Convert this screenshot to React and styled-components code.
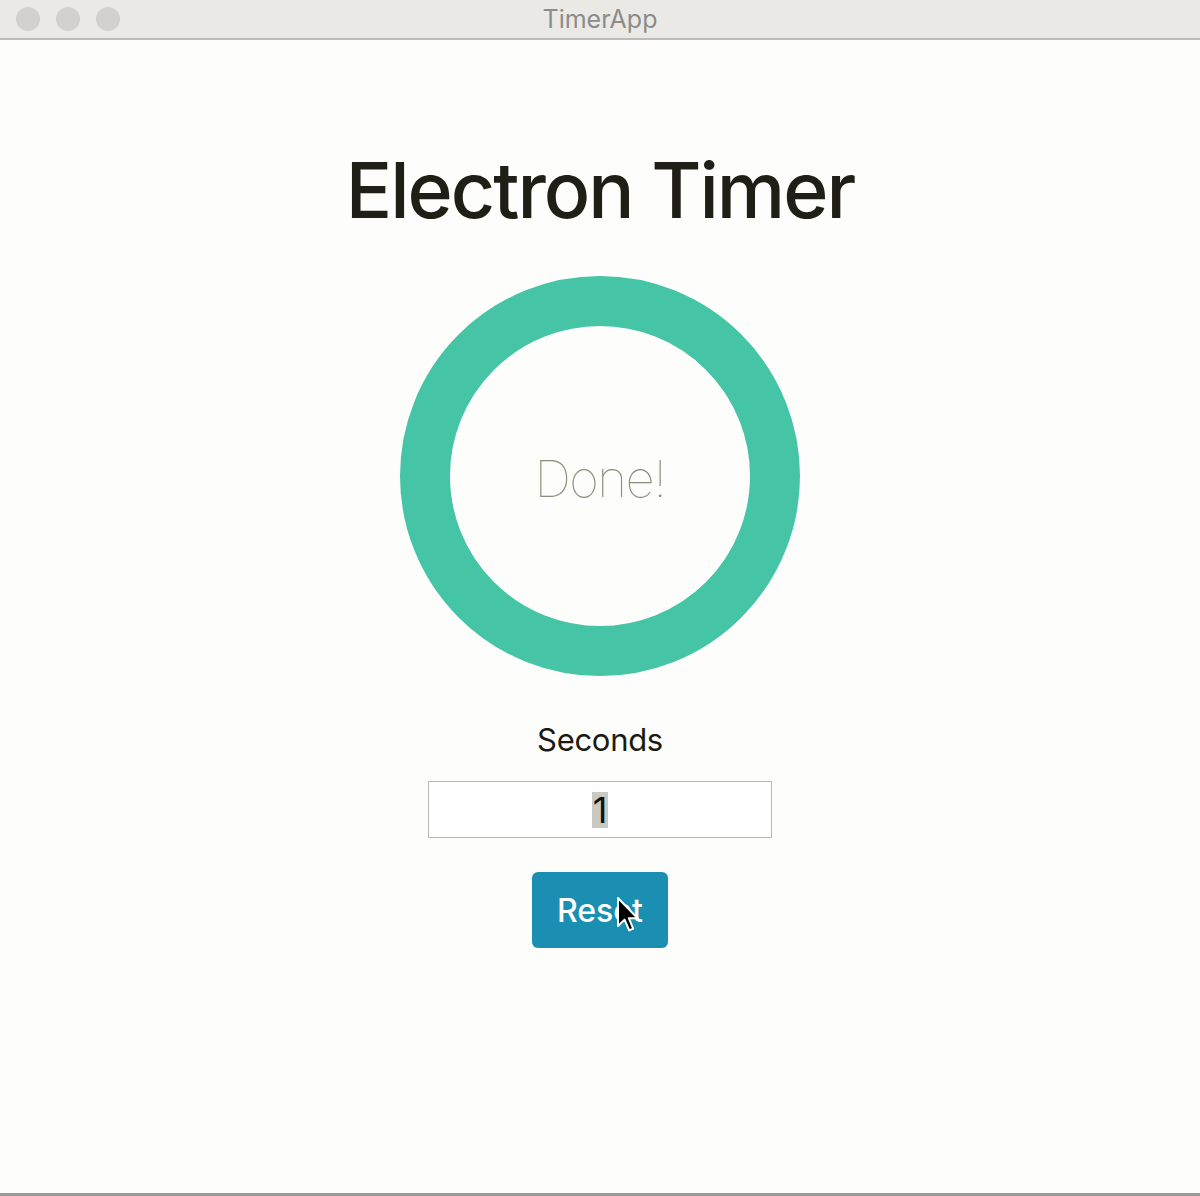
import React from "react"
import styled, { createGlobalStyle } from "styled-components"

const GlobalStyle = createGlobalStyle`
  html, body {
    margin: 0;
    padding: 0;
    background: #fdfdfb;
  }
  body {
    font-family: Inter, "Noto Sans", sans-serif;
  }
`

const Window = styled.div`
  display: flex;
  flex-direction: column;
  height: 1196px;
  box-sizing: border-box;
  border-bottom: 3px solid #9a9a9a;
  background: #fdfdfb;
`

const TitleBar = styled.div`
  display: grid;
  grid-template-columns: 1fr auto 1fr;
  align-items: center;
  height: 38px;
  padding: 0 16px;
  background: #ebe9e5;
  border-bottom: 2px solid #bdbcba;
`

const Lights = styled.div`
  display: flex;
  gap: 16px;
`

const Light = styled.span`
  width: 24px;
  height: 24px;
  border-radius: 50%;
  background: #d2d1cf;
`

const WindowTitle = styled.div`
  font-size: 25px;
  color: #8c8c8c;
  line-height: 38px;
`

const Content = styled.main`
  display: flex;
  flex-direction: column;
  align-items: center;
  padding-top: 105px;
`

const Heading = styled.h1`
  margin: 0;
  font-size: 77px;
  font-weight: 500;
  line-height: 90px;
  color: #1f1f17;
  letter-spacing: -2px;
`

const Ring = styled.div`
  display: flex;
  align-items: center;
  justify-content: center;
  box-sizing: border-box;
  width: 400px;
  height: 400px;
  margin-top: 41px;
  border: 50px solid #45c4a6;
  border-radius: 50%;
`

const RingLabel = styled.span`
  margin-top: 4px;
  font-size: 51px;
  font-weight: 100;
  color: #8c8c78;
  letter-spacing: -1.5px;
`

const Label = styled.div`
  margin-top: 46px;
  font-size: 31px;
  line-height: 36px;
  color: #1a1a12;
  letter-spacing: -0.3px;
`

const Field = styled.div`
  display: flex;
  align-items: center;
  justify-content: center;
  box-sizing: border-box;
  width: 344px;
  height: 57px;
  margin-top: 23px;
  border: 1px solid #b8b8b6;
  background: #fefefe;
  font-size: 36px;
  color: #111;
`

const Selected = styled.span`
  background: #c9c9c1;
  line-height: 36px;
  padding: 0 1px;
`

const ButtonWrap = styled.div`
  position: relative;
  margin-top: 34px;
`

const Button = styled.button`
  width: 136px;
  height: 76px;
  border: none;
  border-radius: 6px;
  background: #1a8fb1;
  color: #ffffff;
  font-family: Inter, "Noto Sans", sans-serif;
  font-size: 32px;
  font-weight: 500;
  cursor: pointer;
`

const Cursor = styled.svg`
  position: absolute;
  left: 84px;
  top: 24px;
  pointer-events: none;
`

export default function App() {
  return (
    <>
      <GlobalStyle />
      <Window>
        <TitleBar>
          <Lights>
            <Light />
            <Light />
            <Light />
          </Lights>
          <WindowTitle>TimerApp</WindowTitle>
          <div />
        </TitleBar>
        <Content>
          <Heading>Electron Timer</Heading>
          <Ring>
            <RingLabel>Done!</RingLabel>
          </Ring>
          <Label>Seconds</Label>
          <Field>
            <Selected>1</Selected>
          </Field>
          <ButtonWrap>
            <Button>Reset</Button>
            <Cursor width="24" height="38" viewBox="0 0 12 19">
              <path
                d="M1 1 L1 15 L4.3 11.8 L6.6 17.2 L8.6 16.3 L6.4 11.1 L10.8 11.1 Z"
                fill="#000"
                stroke="#fff"
                strokeWidth="1"
                strokeLinejoin="round"
              />
            </Cursor>
          </ButtonWrap>
        </Content>
      </Window>
    </>
  )
}
